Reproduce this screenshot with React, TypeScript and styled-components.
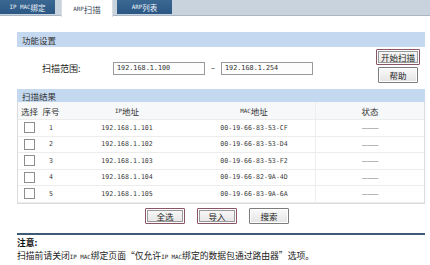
import React from "react";
import styled, { createGlobalStyle, css } from "styled-components";

const Global = createGlobalStyle`
  html, body { margin: 0; padding: 0; background: #fff; }
  body { width: 430px; height: 265px; overflow: hidden; font-family: "Noto Sans CJK SC", "Liberation Sans", sans-serif; color: #333; }
`;

const Page = styled.div`
  width: 430px;
  height: 265px;
  display: flex;
  flex-direction: column;
`;

const TabBar = styled.div`
  height: 15px;
  background: #c9d3de;
  border-bottom: 1px solid #a9b6c4;
  display: flex;
  align-items: flex-start;
  gap: 4px;
`;

const Tab = styled.div<{ $active?: boolean }>`
  width: 55px;
  height: 14px;
  display: flex;
  align-items: center;
  justify-content: center;
  font-size: 7.5px;
  color: #eef3f8;
  background: linear-gradient(#3b6893, #2a5783);
  ${(p) =>
    p.$active &&
    css`
      margin-left: 2px;
      width: 50px;
      height: 17px;
      color: #3a4a5a;
      font-size: 8.5px;
      background: #fff;
      border-left: 1px solid #d6dde5;
      border-right: 1px solid #d6dde5;
      position: relative;
      z-index: 1;
    `}
`;

const Content = styled.div`
  padding: 16px 5px 0 17px;
  display: flex;
  flex-direction: column;
`;

const SectionHead = styled.div<{ $h: number }>`
  height: ${(p) => p.$h}px;
  background: #c4d8ef;
  display: flex;
  align-items: center;
  padding-left: 5px;
  font-size: 8.5px;
  color: #333;
`;

const SettingsRow = styled.div`
  height: 42px;
  display: flex;
  align-items: center;
  padding-left: 25px;
  padding-right: 5px;
`;

const Label = styled.span`
  font-size: 9px;
  width: 71px;
  color: #222;
`;

const Input = styled.div`
  width: 87px;
  height: 11px;
  border: 1px solid #9a9a9a;
  background: #fdfdfd;
  display: flex;
  align-items: center;
  padding-left: 3px;
  box-sizing: content-box;
  font-family: "DejaVu Sans Mono", monospace;
  font-size: 6.8px;
  color: #333;
`;

const Dash = styled.span`
  width: 16px;
  text-align: center;
  font-family: "DejaVu Sans", sans-serif;
  font-size: 8px;
  color: #444;
`;

const ButtonColumn = styled.div`
  margin-left: auto;
  display: flex;
  flex-direction: column;
  align-items: center;
  gap: 2px;
  margin-top: -4px;
`;

const Button = styled.div<{ $focus?: boolean; $w?: number }>`
  width: ${(p) => p.$w ?? 40}px;
  height: 16px;
  box-sizing: border-box;
  display: flex;
  align-items: center;
  justify-content: center;
  font-size: 8.5px;
  color: #222;
  background: linear-gradient(#fafafa, #e4e4e4);
  border: 1px solid #7c7c7c;
  border-radius: 1px;
  box-shadow: inset 0 0 0 1px #fff;
  ${(p) =>
    p.$focus &&
    css`
      border: 1px solid #8a5565;
      box-shadow: inset 0 0 0 1px #fff, inset 0 0 0 2px #9a9a9a;
    `}
`;

const Table = styled.div`
  display: grid;
  grid-template-columns: 23px 20px 132px 123px 1fr;
  border-left: 1px solid #dcdcdc;
  border-right: 1px solid #dcdcdc;
  border-bottom: 1px solid #dcdcdc;
`;

const Cell = styled.div<{ $head?: boolean; $mono?: boolean }>`
  height: ${(p) => (p.$head ? 18 : 16.5)}px;
  display: flex;
  align-items: center;
  justify-content: center;
  border-bottom: 1px solid #ececec;
  border-right: 1px solid #eeeeee;
  box-sizing: border-box;
  font-size: ${(p) => (p.$head ? 8.5 : 7)}px;
  color: #333;
  background: ${(p) => (p.$head ? "#f7f8f9" : "#fff")};
  ${(p) =>
    p.$mono &&
    css`
      font-family: "DejaVu Sans Mono", monospace;
      font-size: 6.6px;
      color: #3a3a3a;
    `}
  &:nth-child(5n + 1), &:nth-child(5n + 2), &:nth-child(5n + 3) { border-right: none; }
  &:nth-child(5n) { border-right: none; }
`;

const Checkbox = styled.span`
  width: 9px;
  height: 9px;
  border: 1px solid #8e8e8e;
  background: #fff;
  display: block;
`;

const Status = styled.span`
  font-family: "DejaVu Sans", sans-serif;
  font-size: 6px;
  letter-spacing: -0.5px;
  color: #555;
`;

const ButtonRow = styled.div`
  display: flex;
  justify-content: center;
  gap: 12px;
  padding: 4px 0 0 0;
  height: 24px;
  margin-left: -8px;
`;

const Rule = styled.div`
  height: 2px;
  background: #3e5a76;
  margin-top: 1px;
`;

const NoteTitle = styled.div`
  font-size: 8.8px;
  font-weight: bold;
  color: #111;
  margin-top: 2px;
  line-height: 12px;
`;

const NoteText = styled.div`
  font-size: 8.8px;
  color: #222;
  line-height: 13px;
  white-space: nowrap;
`;

const Small = styled.span`
  font-family: "DejaVu Sans Mono", monospace;
  font-size: 5.8px;
`;

const rows = [
  ["1", "192.168.1.101", "00-19-66-83-53-CF"],
  ["2", "192.168.1.102", "00-19-66-83-53-D4"],
  ["3", "192.168.1.103", "00-19-66-83-53-F2"],
  ["4", "192.168.1.104", "00-19-66-82-9A-4D"],
  ["5", "192.168.1.105", "00-19-66-83-9A-6A"],
];

export default function App() {
  return (
    <Page>
      <Global />
      <TabBar>
        <Tab>
          <Small>IP MAC</Small>绑定
        </Tab>
        <Tab $active>
          <Small>ARP</Small>扫描
        </Tab>
        <Tab>
          <Small>ARP</Small>列表
        </Tab>
      </TabBar>
      <Content>
        <SectionHead $h={15}>功能设置</SectionHead>
        <SettingsRow>
          <Label>扫描范围:</Label>
          <Input>192.168.1.100</Input>
          <Dash>–</Dash>
          <Input>192.168.1.254</Input>
          <ButtonColumn>
            <Button $focus $w={44}>开始扫描</Button>
            <Button $w={40}>帮助</Button>
          </ButtonColumn>
        </SettingsRow>
        <SectionHead $h={13}>扫描结果</SectionHead>
        <Table>
          <Cell $head>选择</Cell>
          <Cell $head>序号</Cell>
          <Cell $head>
            <Small>IP</Small>地址
          </Cell>
          <Cell $head>
            <Small>MAC</Small>地址
          </Cell>
          <Cell $head>状态</Cell>
          {rows.map(([n, ip, mac]) => (
            <React.Fragment key={n}>
              <Cell>
                <Checkbox />
              </Cell>
              <Cell $mono>{n}</Cell>
              <Cell $mono>{ip}</Cell>
              <Cell $mono>{mac}</Cell>
              <Cell>
                <Status>———</Status>
              </Cell>
            </React.Fragment>
          ))}
        </Table>
        <ButtonRow>
          <Button $focus>全选</Button>
          <Button $focus>导入</Button>
          <Button>搜索</Button>
        </ButtonRow>
        <Rule />
        <NoteTitle>注意:</NoteTitle>
        <NoteText>
          扫描前请关闭<Small>IP MAC</Small>绑定页面“仅允许<Small>IP MAC</Small>绑定的数据包通过路由器”选项。
        </NoteText>
      </Content>
    </Page>
  );
}
